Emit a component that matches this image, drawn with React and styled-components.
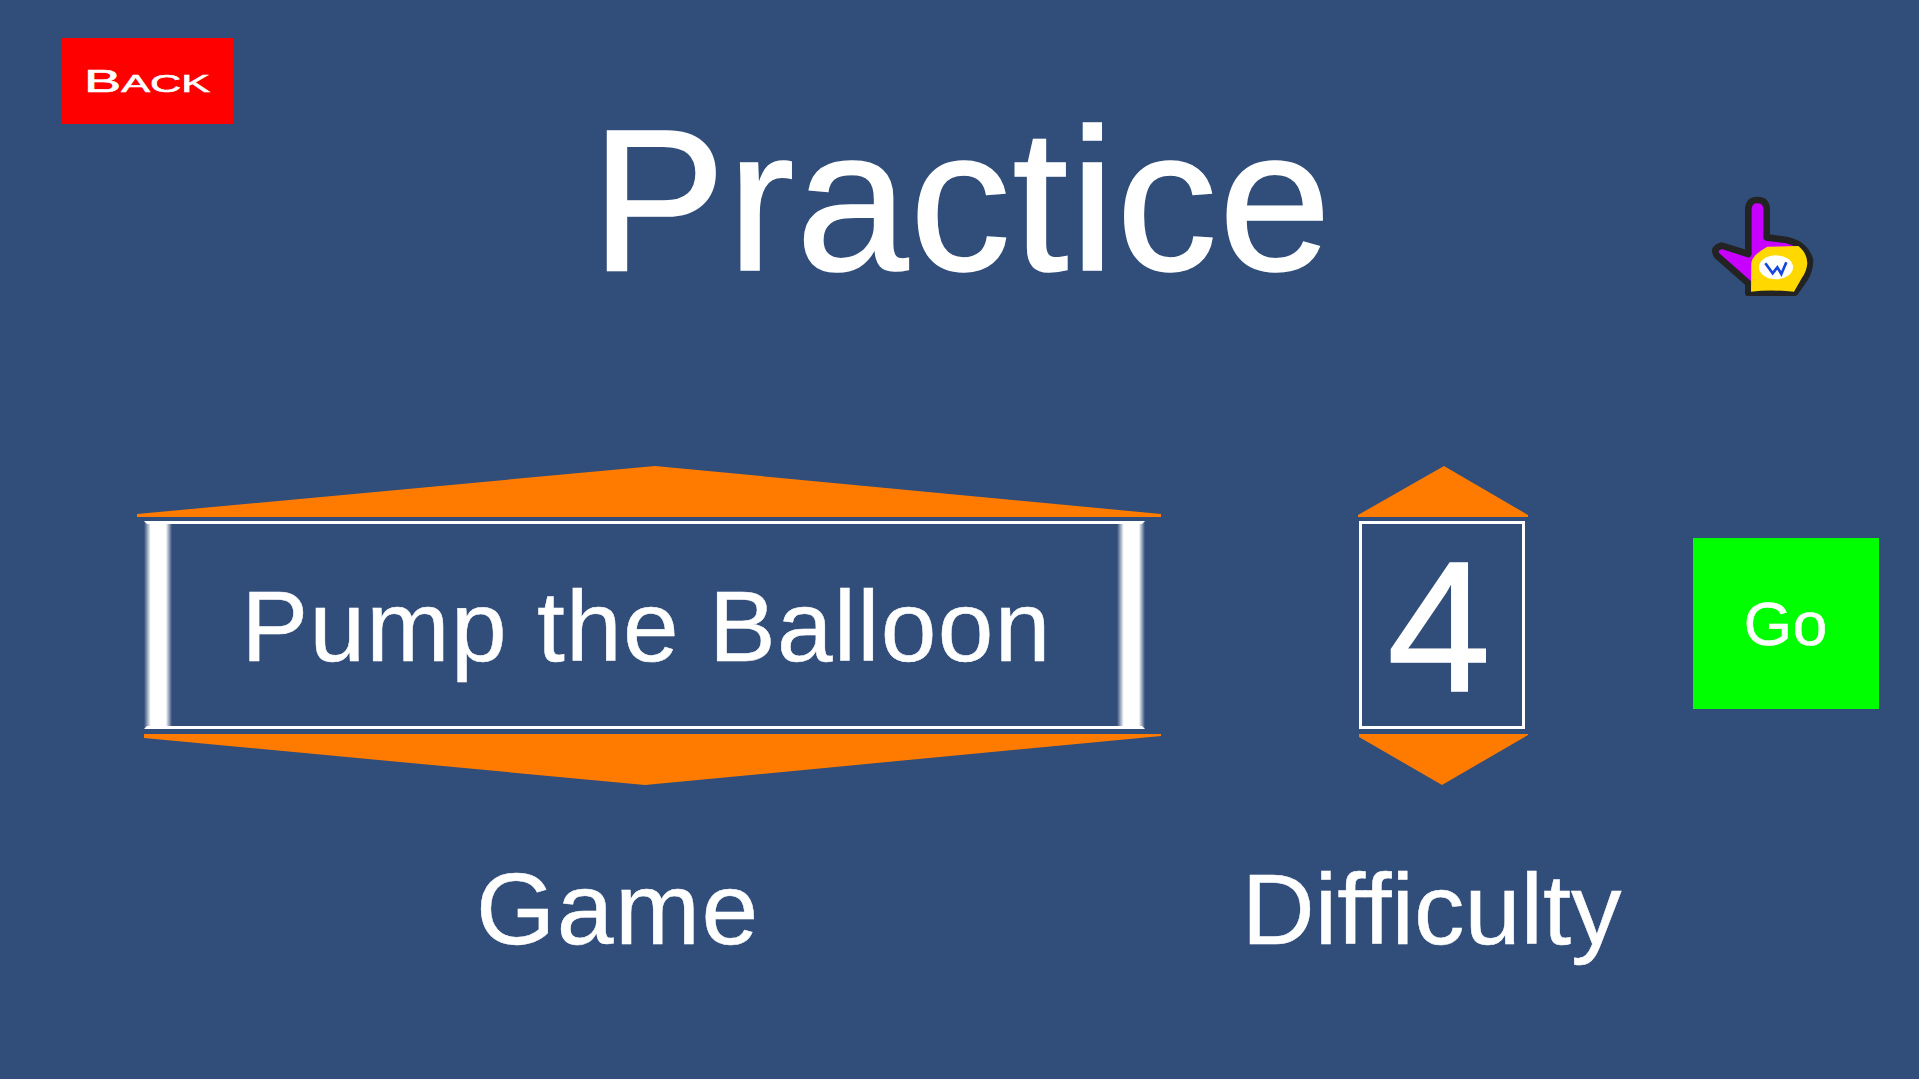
import React from "react";
import styled, { createGlobalStyle } from "styled-components";

const Global = createGlobalStyle`
  html, body { margin: 0; padding: 0; background: #314d79; overflow: hidden; }
  * { box-sizing: border-box; }
`;

const Page = styled.div`
  position: relative;
  width: 1919px;
  height: 1079px;
  background: #314d79;
  color: #fff;
  font-family: "Liberation Sans", Arial, sans-serif;
  overflow: hidden;
`;

const TopRow = styled.div`
  display: flex;
  align-items: flex-start;
  height: 466px;
  padding: 38px 0 0 62px;
`;

const BackButton = styled.div`
  width: 171px;
  height: 86px;
  background: #ff0000;
  display: flex;
  align-items: center;
  justify-content: center;
`;

const BackLabel = styled.span`
  font-size: 31px;
  line-height: 1;
  text-transform: uppercase;
  display: inline-block;
  transform: scaleX(1.8);
  -webkit-text-stroke: 0.6px #fff;
`;

const SmallCap = styled.span`
  font-size: 24px;
`;

const Title = styled.h1`
  margin: 46px 0 0 358px;
  font-size: 202px;
  line-height: 232px;
  font-weight: 400;
  letter-spacing: 1.5px;
  -webkit-text-stroke: 1.5px #fff;
`;

const SelectorRow = styled.div`
  display: flex;
  align-items: flex-start;
  padding-left: 137px;
  height: 319px;
`;

const Spinner = styled.div`
  display: flex;
  flex-direction: column;
  flex: none;
  width: ${(p) => p.$width}px;
  margin-right: ${(p) => p.$gap}px;
`;

const Arrow = styled.svg`
  display: block;
  width: 100%;
  flex: none;
`;

const ValueBox = styled.div`
  height: 208px;
  margin: 4px ${(p) => p.$right}px 5px ${(p) => p.$left}px;
  border: 3px solid #fff;
  ${(p) => p.$openSides && "border-left-color: transparent; border-right-color: transparent;"}
  display: flex;
  align-items: center;
  justify-content: center;
  position: relative;
  font-size: ${(p) => p.$size}px;
  line-height: 1;
  letter-spacing: ${(p) => p.$spacing || 0}px;
  -webkit-text-stroke: ${(p) => p.$stroke}px #fff;
`;

const ValueText = styled.span`
  display: block;
  white-space: nowrap;
  transform: translate(${(p) => p.$dx}px, ${(p) => p.$dy}px);
`;

const EdgeBar = styled.div`
  position: absolute;
  top: -3px;
  bottom: -3px;
  width: ${(p) => p.$w}px;
  ${(p) => (p.$right ? "right: -3px;" : "left: -3px;")}
  background: linear-gradient(
    90deg,
    rgba(255, 255, 255, 0) 0%,
    #fff 24%,
    #fff 78%,
    rgba(255, 255, 255, 0) 100%
  );
`;

const GoButton = styled.div`
  flex: none;
  width: 186px;
  height: 171px;
  margin-top: 72px;
  background: #00ff00;
  display: flex;
  align-items: center;
  justify-content: center;
  font-size: 62px;
  line-height: 1;
  letter-spacing: 1px;
  -webkit-text-stroke: 0.6px #fff;
`;

const LabelRow = styled.div`
  display: flex;
  align-items: flex-start;
  padding: 65px 0 0 476px;
`;

const Label = styled.div`
  font-size: ${(p) => p.$size}px;
  line-height: 118px;
  letter-spacing: ${(p) => p.$spacing || 0}px;
  margin-right: ${(p) => p.$gap || 0}px;
  -webkit-text-stroke: 0.5px #fff;
`;

const Cursor = styled.svg`
  position: absolute;
  left: 1680px;
  top: 180px;
  width: 150px;
  height: 130px;
`;

export default function App() {
  return (
    <Page>
      <Global />
      <TopRow>
        <BackButton>
          <BackLabel>
            B<SmallCap>ack</SmallCap>
          </BackLabel>
        </BackButton>
        <Title>Practice</Title>
      </TopRow>
      <SelectorRow>
        <Spinner $width={1024} $gap={197}>
          <Arrow viewBox="0 0 1024 51" height="51">
            <polygon points="0,48 518,0 1024,48 1024,51 0,51" fill="#ff7b00" />
          </Arrow>
          <ValueBox $openSides $left={7} $right={16} $size={100} $spacing={1.3} $stroke={0.5}>
            <EdgeBar $w={28} />
            <EdgeBar $w={28} $right />
            <ValueText $dx={2} $dy={1}>Pump the Balloon</ValueText>
          </ValueBox>
          <Arrow viewBox="0 0 1024 51" height="51">
            <polygon points="7,0 1024,0 1024,2 508,51 7,4" fill="#ff7b00" />
          </Arrow>
        </Spinner>
        <Spinner $width={170} $gap={165}>
          <Arrow viewBox="0 0 170 51" height="51">
            <polygon points="0,49 86,0 170,49 170,51 0,51" fill="#ff7b00" />
          </Arrow>
          <ValueBox $left={1} $right={3} $size={186} $stroke={1.5}>
            <ValueText $dx={-3} $dy={2}>4</ValueText>
          </ValueBox>
          <Arrow viewBox="0 0 170 51" height="51">
            <polygon points="1,0 170,0 170,1 84,51 1,3" fill="#ff7b00" />
          </Arrow>
        </Spinner>
        <GoButton>Go</GoButton>
      </SelectorRow>
      <LabelRow>
        <Label $size={102} $spacing={1.5} $gap={482}>Game</Label>
        <Label $size={101}>Difficulty</Label>
      </LabelRow>
      <Cursor viewBox="0 0 450 390">
        <path
          d="M205 222 L205 85 Q208 60 232 60 Q258 60 260 85 L260 172 L320 180 Q375 192 390 240 Q390 270 375 295 L345 338 L205 338 L205 310 L112 228 Q95 205 125 197 Z"
          fill="#c800ff"
          stroke="#232323"
          strokeWidth="20"
          strokeLinejoin="round"
        />
        <path
          d="M214 250 Q216 225 262 200 L355 198 Q382 220 382 250 Q380 275 365 295 L342 335 Q270 328 213 335 Z"
          fill="#ffd800"
        />
        <ellipse cx="288" cy="262" rx="51" ry="36" fill="#fff" />
        <polyline
          points="256,250 278,280 292,262 304,282 319,247"
          fill="none"
          stroke="#1746dc"
          strokeWidth="8"
        />
      </Cursor>
    </Page>
  );
}
